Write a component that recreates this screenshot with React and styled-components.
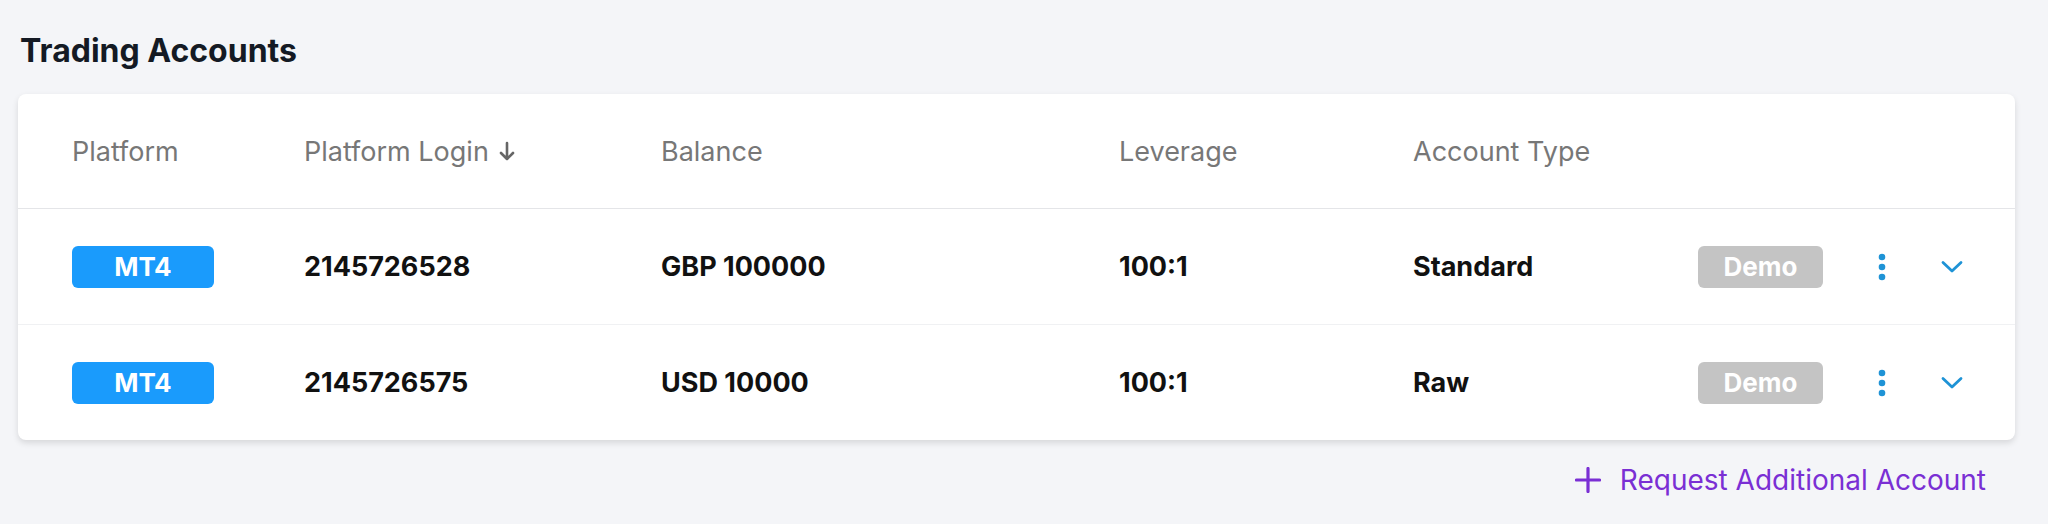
import styled, { createGlobalStyle } from 'styled-components';

const GlobalStyle = createGlobalStyle`
  body {
    margin: 0;
    background: #f4f5f8;
    font-family: Inter, "Noto Sans", sans-serif;
  }
`

const Page = styled.div`
  padding: 30px 33px 0 18px;
  box-sizing: border-box;
  width: 2048px;
  height: 524px;
`

const Title = styled.h2`
  margin: 0 0 22px 2px;
  font-size: 32px;
  font-weight: 700;
  color: #141a24;
  line-height: 42px;
`

/** White card holding the table */
const Card = styled.div`
  background: #fff;
  border-radius: 8px;
  box-shadow: 0 3px 6px rgba(0, 0, 0, 0.12);
`

const Row = styled.div`
  display: grid;
  grid-template-columns: 232px 357px 458px 294px 285px 180px 63px auto;
  align-items: center;
  height: ${props => props.header ? '114px' : '115px'};
  padding-left: 54px;
  border-bottom: 1px solid ${props => props.header ? '#e4e5e8' : '#f0f1f3'};

  &:last-child {
    border-bottom: none;
  }
`

const HeadCell = styled.div`
  font-size: 27px;
  color: #777;
  display: flex;
  align-items: center;
  gap: 10px;
`

const Cell = styled.div`
  font-size: 27px;
  font-weight: 700;
  color: #111;
`

const Badge = styled.span`
  display: inline-flex;
  align-items: center;
  justify-content: center;
  width: ${props => props.w}px;
  height: 42px;
  border-radius: 6px;
  background: ${props => props.bg};
  color: #fff;
  font-size: 26px;
  font-weight: 700;
`

const IconButton = styled.button`
  border: none;
  background: none;
  padding: 0;
  display: flex;
  align-items: center;
  cursor: pointer;
`

const Footer = styled.div`
  display: flex;
  justify-content: flex-end;
  padding: 23px 29px 0 0;
`

const AddLink = styled.a`
  display: flex;
  align-items: center;
  gap: 19px;
  color: #7a2fd4;
  font-size: 28px;
  text-decoration: none;
`

const accounts = [
  { platform: 'MT4', login: '2145726528', balance: 'GBP 100000', leverage: '100:1', type: 'Standard' },
  { platform: 'MT4', login: '2145726575', balance: 'USD 10000', leverage: '100:1', type: 'Raw' },
]

function Dots() {
  return (
    <svg width="8" height="28" viewBox="0 0 8 28">
      <circle cx="4" cy="4" r="3.3" fill="#1e93d6" />
      <circle cx="4" cy="14" r="3.3" fill="#1e93d6" />
      <circle cx="4" cy="24" r="3.3" fill="#1e93d6" />
    </svg>
  )
}

function Chevron() {
  return (
    <svg width="22" height="14" viewBox="0 0 22 14">
      <path d="M2 2.5 L11 11 L20 2.5" fill="none" stroke="#1e93d6" strokeWidth="2.8" strokeLinecap="round" strokeLinejoin="round" />
    </svg>
  )
}

export default function App() {
  return (
    <Page>
      <GlobalStyle />
      <Title>Trading Accounts</Title>
      <Card>
        <Row header>
          <HeadCell>Platform</HeadCell>
          <HeadCell>
            Platform Login
            <svg width="16" height="20" viewBox="0 0 16 20">
              <path d="M8 2 V18 M2 12 L8 18 L14 12" fill="none" stroke="#666" strokeWidth="2.6" strokeLinecap="round" strokeLinejoin="round" />
            </svg>
          </HeadCell>
          <HeadCell>Balance</HeadCell>
          <HeadCell>Leverage</HeadCell>
          <HeadCell>Account Type</HeadCell>
        </Row>
        {accounts.map(a => (
          <Row key={a.login}>
            <Cell><Badge w={142} bg="#1a9bfc">{a.platform}</Badge></Cell>
            <Cell>{a.login}</Cell>
            <Cell>{a.balance}</Cell>
            <Cell>{a.leverage}</Cell>
            <Cell>{a.type}</Cell>
            <Cell><Badge w={125} bg="#c4c4c4">Demo</Badge></Cell>
            <IconButton><Dots /></IconButton>
            <IconButton><Chevron /></IconButton>
          </Row>
        ))}
      </Card>
      <Footer>
        <AddLink href="#">
          <svg width="26" height="26" viewBox="0 0 26 26">
            <path d="M13 1.5 V24.5 M1.5 13 H24.5" stroke="#7a2fd4" strokeWidth="3.2" strokeLinecap="round" />
          </svg>
          Request Additional Account
        </AddLink>
      </Footer>
    </Page>
  )
}
